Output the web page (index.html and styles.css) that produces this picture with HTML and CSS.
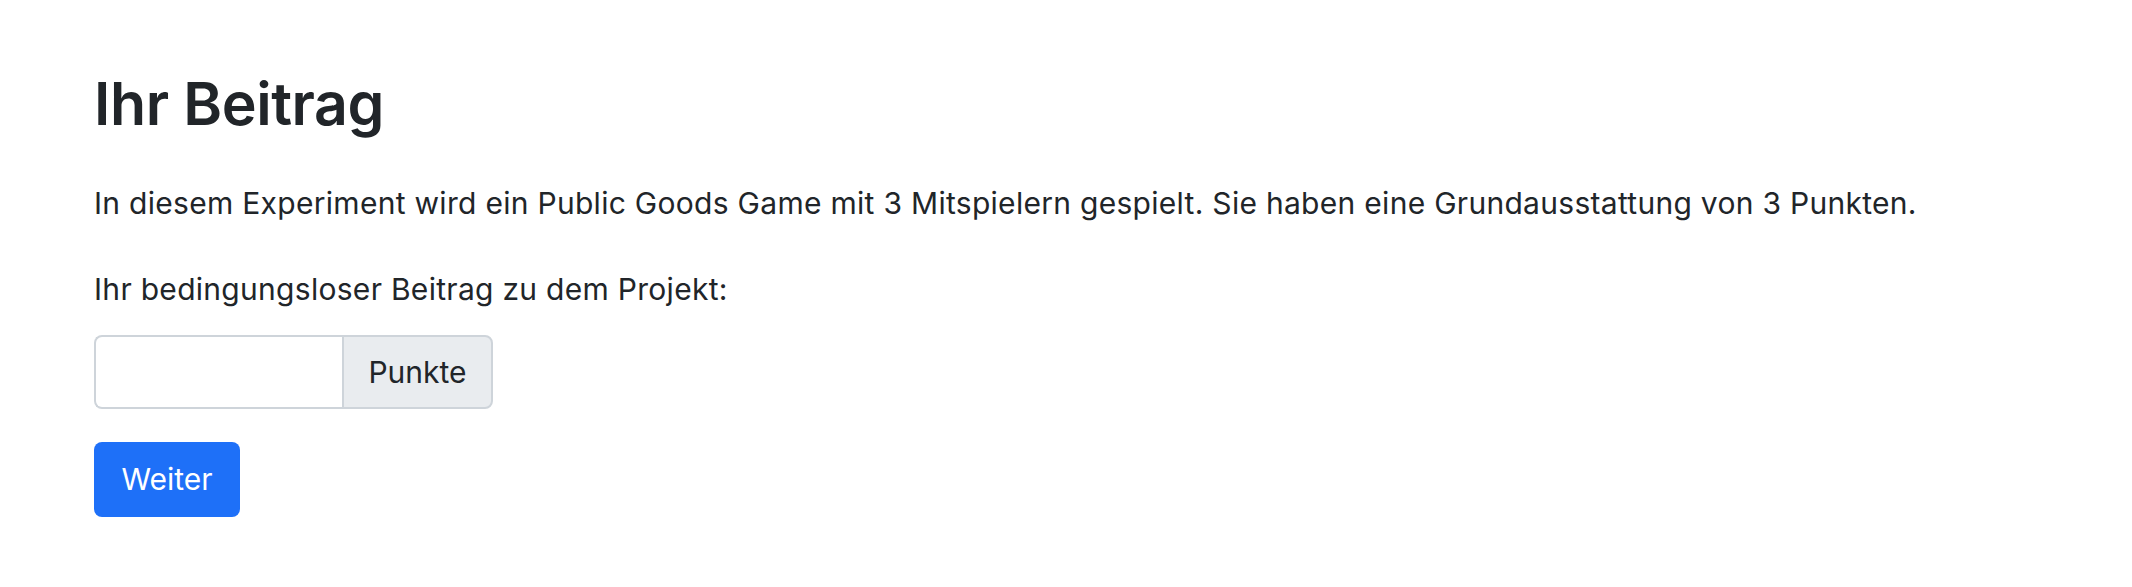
FILE: index.html
```html
<!DOCTYPE html>
<html lang="de">
<head>
<meta charset="utf-8">
<title>Ihr Beitrag</title>
<link rel="stylesheet" href="styles.css">
</head>
<body>
<main class="page">
  <h1 class="title">Ihr Beitrag</h1>
  <p class="intro">In diesem Experiment wird ein Public Goods Game mit 3 Mitspielern gespielt. Sie haben eine Grundausstattung von 3 Punkten.</p>
  <form class="form">
    <label class="label" for="beitrag">Ihr bedingungsloser Beitrag zu dem Projekt:</label>
    <div class="input-group">
      <input class="input" id="beitrag" type="text">
      <span class="addon">Punkte</span>
    </div>
    <button class="btn" type="button">Weiter</button>
  </form>
</main>
</body>
</html>
```

FILE: styles.css
```css
* { box-sizing: border-box; }
html, body { margin: 0; padding: 0; background: #fff; }
body {
  font-family: Inter, "Liberation Sans", sans-serif;
  color: #212529;
  font-size: 30px;
  line-height: 1.5;
  letter-spacing: 0.29px;
}
.page {
  padding: 68px 94px 0 94px;
}
.title {
  margin: 0;
  font-size: 59px;
  line-height: 72px;
  font-weight: 600;
  letter-spacing: -0.4px;
}
.intro {
  margin: 41px 0 0 0;
}
.form {
  display: flex;
  flex-direction: column;
  align-items: flex-start;
  margin-top: 41px;
}
.label {
  display: block;
}
.input-group {
  display: flex;
  margin-top: 23px;
  height: 74px;
}
.input {
  width: 248px;
  height: 74px;
  border: 2px solid #ced4da;
  border-right-width: 0;
  border-radius: 8px 0 0 8px;
  font: inherit;
  padding: 0 22px;
  background: #fff;
  outline: none;
}
.addon {
  display: flex;
  align-items: center;
  justify-content: center;
  width: 151px;
  height: 74px;
  background: #e9ecef;
  border: 2px solid #ced4da;
  border-radius: 0 8px 8px 0;
  font-size: 30px;
  letter-spacing: 0;
}
.btn {
  margin-top: 33px;
  width: 146px;
  height: 75px;
  border: 0;
  border-radius: 8px;
  background: #1e70f8;
  color: #fff;
  font: inherit;
  font-size: 30px;
  letter-spacing: 0;
  padding: 0;
}
```
